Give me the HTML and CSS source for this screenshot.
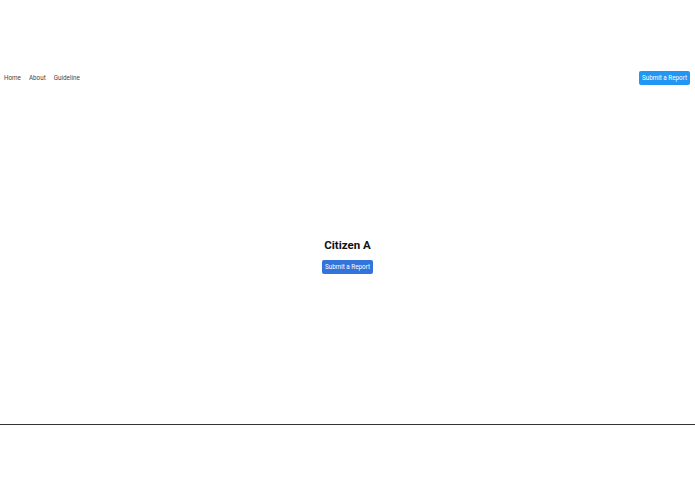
FILE: index.html
```html
<!DOCTYPE html>
<html>
<head>
<meta charset="utf-8">
<link rel="stylesheet" href="styles.css">
</head>
<body>
<div class="page">
  <header class="nav">
    <div class="links">
      <a href="#">Home</a>
      <a href="#">About</a>
      <a href="#">Guideline</a>
    </div>
    <button class="btn btn-top">Submit a Report</button>
  </header>
  <main class="hero">
    <h1>Citizen A</h1>
    <button class="btn btn-main">Submit a Report</button>
  </main>
  <footer class="foot"></footer>
</div>
</body>
</html>
```
FILE: styles.css
```css
html, body { margin: 0; padding: 0; background: #fff; }
body { font-family: Roboto, "Liberation Sans", sans-serif; color: #222; }
.page { width: 695px; height: 494px; display: flex; flex-direction: column; }
.nav { margin-top: 71px; height: 14px; display: flex; align-items: center; justify-content: space-between; padding: 0 5px 0 4px; }
.links { display: flex; gap: 8px; }
.links a { font-size: 6.3px; color: #444; text-decoration: none; }
.btn { border: none; border-radius: 2px; color: #fff; font-family: Roboto, "Liberation Sans", sans-serif; font-size: 6.3px; height: 14px; width: 51px; padding: 0; display: flex; align-items: center; justify-content: center; }
.btn-top { background: #2196f3; }
.hero { height: 339px; display: flex; flex-direction: column; align-items: center; justify-content: center; }
.hero h1 { margin: 0 0 8px; font-size: 11.5px; line-height: 14px; font-weight: 700; color: #111; padding-top: 3px; }
.btn-main { background: #3273dc; }
.foot { border-top: 1px solid #333; height: 69px; }
```
